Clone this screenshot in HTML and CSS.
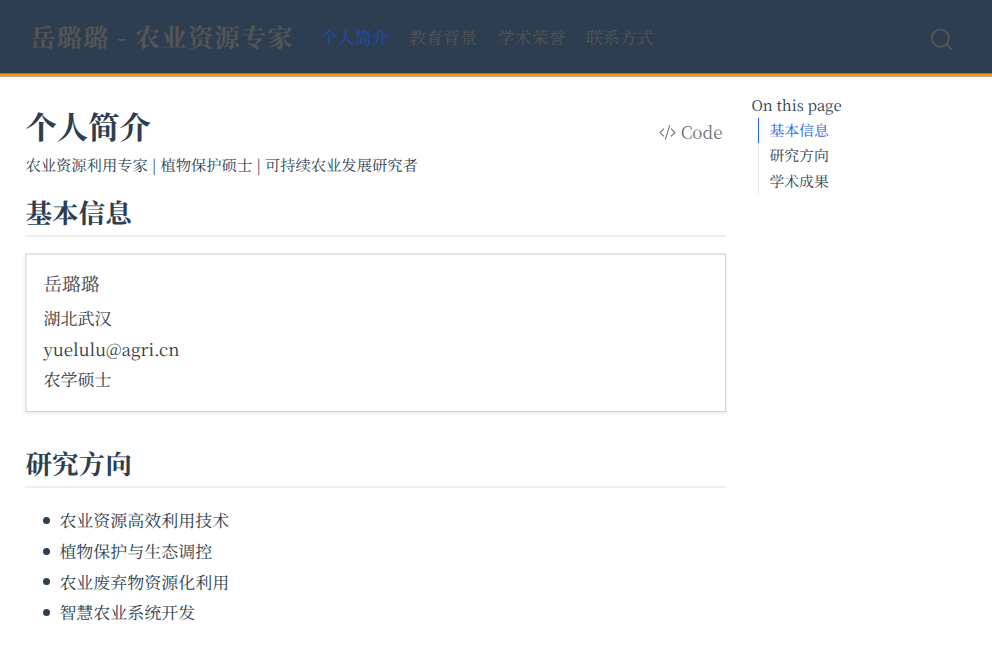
FILE: index.html
```html
<!DOCTYPE html>
<html lang="zh-CN">
<head>
<meta charset="utf-8">
<title>个人简介</title>
<link rel="stylesheet" href="styles.css">
</head>
<body>
<header class="navbar">
  <a class="brand">岳璐璐 - 农业资源专家</a>
  <nav class="nav">
    <a class="nav-link active">个人简介</a>
    <a class="nav-link">教育背景</a>
    <a class="nav-link">学术荣誉</a>
    <a class="nav-link">联系方式</a>
  </nav>
  <svg class="search" viewBox="0 0 22 22" fill="none" stroke="currentColor" stroke-width="2"><circle cx="9.4" cy="9.7" r="8.6"/><path d="M15.4 15.7l5.8 5.8"/></svg>
</header>
<div class="page">
  <main class="content">
    <div class="title-row">
      <h1>个人简介</h1>
      <button class="code-tools"><svg viewBox="0 0 16 16" fill="currentColor"><path d="M10.478 1.647a.5.5 0 1 0-.956-.294l-4 13a.5.5 0 0 0 .956.294l4-13zM4.854 4.146a.5.5 0 0 1 0 .708L1.707 8l3.147 3.146a.5.5 0 0 1-.708.708l-3.5-3.5a.5.5 0 0 1 0-.708l3.5-3.5a.5.5 0 0 1 .708 0zm6.292 0a.5.5 0 0 0 0 .708L14.293 8l-3.147 3.146a.5.5 0 0 0 .708.708l3.5-3.5a.5.5 0 0 0 0-.708l-3.5-3.5a.5.5 0 0 0-.708 0z"/></svg> Code</button>
    </div>
    <p class="subtitle">农业资源利用专家 | 植物保护硕士 | 可持续农业发展研究者</p>
    <section>
      <h2>基本信息</h2>
      <div class="card">
        <p class="name">岳璐璐</p>
        <p>湖北武汉</p>
        <p>yuelulu@agri.cn</p>
        <p>农学硕士</p>
      </div>
    </section>
    <section>
      <h2>研究方向</h2>
      <ul class="topics">
        <li>农业资源高效利用技术</li>
        <li>植物保护与生态调控</li>
        <li>农业废弃物资源化利用</li>
        <li>智慧农业系统开发</li>
      </ul>
    </section>
  </main>
  <aside class="toc">
    <h3>On this page</h3>
    <ul>
      <li class="active">基本信息</li>
      <li>研究方向</li>
      <li>学术成果</li>
    </ul>
  </aside>
</div>
</body>
</html>
```
FILE: styles.css
```css
* { box-sizing: border-box; }
html { font-size: 17px; }
body {
  margin: 0;
  height: 657px;
  overflow: hidden;
  background: #fff;
  color: #2c3e50;
  font-family: "Noto Serif CJK SC", "Noto Serif SC", serif;
  line-height: 30.6px;
  text-rendering: geometricPrecision;
}
h1, h2, h3, p, ul { margin: 0; padding: 0; }
.navbar {
  display: flex;
  align-items: center;
  height: 77px;
  margin-top: -1px;
  padding: 2px 39px 0 30px;
  background: #2c3e50;
  border-bottom: 3px solid #f39c12;
  color: #545555;
  transform: translateY(.4px);
}
.brand {
  margin-right: 27px;
  font-size: 25.5px;
  font-weight: 700;
  letter-spacing: 1px;
  white-space: nowrap;
}
.nav { display: flex; gap: 20.4px; }
.nav-link.active { color: #1f4eb6; }
.search {
  width: 22px;
  height: 22px;
  margin: 4px 0 0 auto;
}
.page {
  display: grid;
  grid-template-columns: 700.5px 200px;
  column-gap: 25.5px;
  padding: 19.4px 0 0 25.4px;
}
.title-row {
  display: flex;
  justify-content: space-between;
  height: 56px;
}
h1 { font-size: 31.4px; line-height: 62px; }
h2 {
  height: 46px;
  border-bottom: 2px solid #eee;
  font-size: 26.6px;
  line-height: 41px;
}
.code-tools {
  display: flex;
  align-items: center;
  gap: 5px;
  height: 30px;
  margin-top: 22px;
  padding: 0 3.4px 0 0;
  border: 0;
  background: none;
  color: #6b737b;
  font: 17px/30px "Noto Serif CJK SC", "Noto Serif SC", serif;
}
.code-tools svg { width: 17px; height: 17px; }
.subtitle { height: 40px; font-size: 15.3px; line-height: 28.4px; }
.card {
  height: 159px;
  margin: 16px 0 30px;
  padding: 14px 16px;
  border: 1px solid #d0d1d2;
  border-top: 2px solid #e5e5e5;
  border-left: 2px solid #e5e5e5;
  box-shadow: 0 2px 4px rgba(0, 0, 0, .08);
  color: #343a40;
}
.card .name { margin-bottom: 3px; color: #454a50; font-size: 18.7px; }
.topics { margin-top: 17px; padding-left: 17.6px; list-style: none; }
.topics li { display: flex; align-items: center; }
.topics li::before {
  content: "";
  width: 7px;
  height: 7px;
  margin: 0 9.4px 0 0;
  border-radius: 50%;
  background: currentColor;
}
.toc { padding-top: .6px; font-size: 14.875px; }
.toc h3 { height: 22px; font-size: 14.875px; font-weight: 400; line-height: 20px; }
.toc ul { margin-left: 6.6px; list-style: none; }
.toc li {
  height: 25.3px;
  padding-left: 10.4px;
  border-left: 1px solid #e9ecef;
  line-height: 25.8px;
}
.toc .active { border-color: #2761e3; color: #2761e3; }
```
